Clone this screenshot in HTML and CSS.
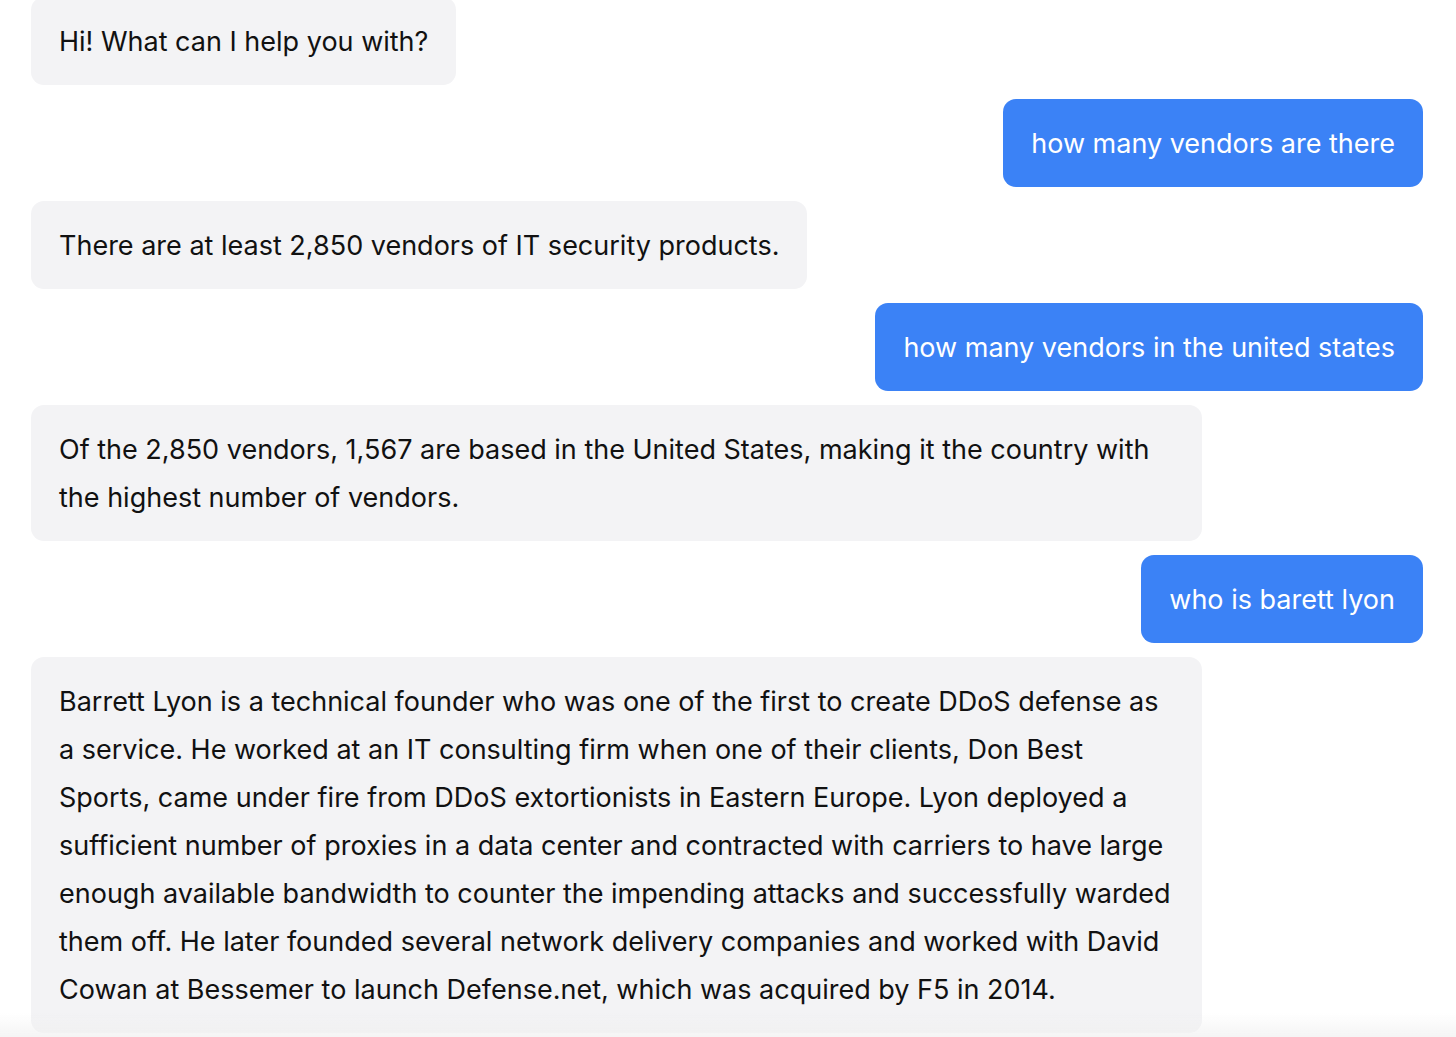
FILE: index.html
```html
<!DOCTYPE html>
<html lang="en">
<head>
<meta charset="utf-8">
<title>Chat</title>
<link rel="stylesheet" href="styles.css">
</head>
<body>
<main class="chat">
  <div class="msg bot">Hi! What can I help you with?</div>
  <div class="msg user">how many vendors are there</div>
  <div class="msg bot">There are at least 2,850 vendors of IT security products.</div>
  <div class="msg user">how many vendors in the united states</div>
  <div class="msg bot">Of the 2,850 vendors, 1,567 are based in the United States, making it the country with the highest number of vendors.</div>
  <div class="msg user">who is barett lyon</div>
  <div class="msg bot">Barrett Lyon is a technical founder who was one of the first to create DDoS defense as a service. He worked at an IT consulting firm when one of their clients, Don Best Sports, came under fire from DDoS extortionists in Eastern Europe. Lyon deployed a sufficient number of proxies in a data center and contracted with carriers to have large enough available bandwidth to counter the impending attacks and successfully warded them off. He later founded several network delivery companies and worked with David Cowan at Bessemer to launch Defense.net, which was acquired by F5 in 2014.</div>
</main>
<div class="fade"></div>
</body>
</html>
```
FILE: styles.css
```css
html, body {
  margin: 0;
  padding: 0;
  background: #ffffff;
  height: 100%;
  overflow: hidden;
}
body {
  font-family: Inter, "Noto Sans", sans-serif;
  font-size: 27px;
  letter-spacing: 0;
  line-height: 48px;
  color: #111111;
}
.chat {
  display: flex;
  flex-direction: column;
  gap: 14px;
  padding: 0 33px 0 31px;
  margin-top: -3px;
}
.msg {
  max-width: 1115px;
  padding: 21px 28px 19px;
  border-radius: 13px;
  width: fit-content;
}
.bot {
  align-self: flex-start;
  background: #f3f3f5;
}
.user {
  align-self: flex-end;
  background: #3b82f6;
  color: #ffffff;
}
.fade {
  position: fixed;
  left: 0;
  right: 0;
  bottom: 0;
  height: 24px;
  background: linear-gradient(to bottom, rgba(240,240,240,0), rgba(240,240,240,0.7));
  pointer-events: none;
}
```
